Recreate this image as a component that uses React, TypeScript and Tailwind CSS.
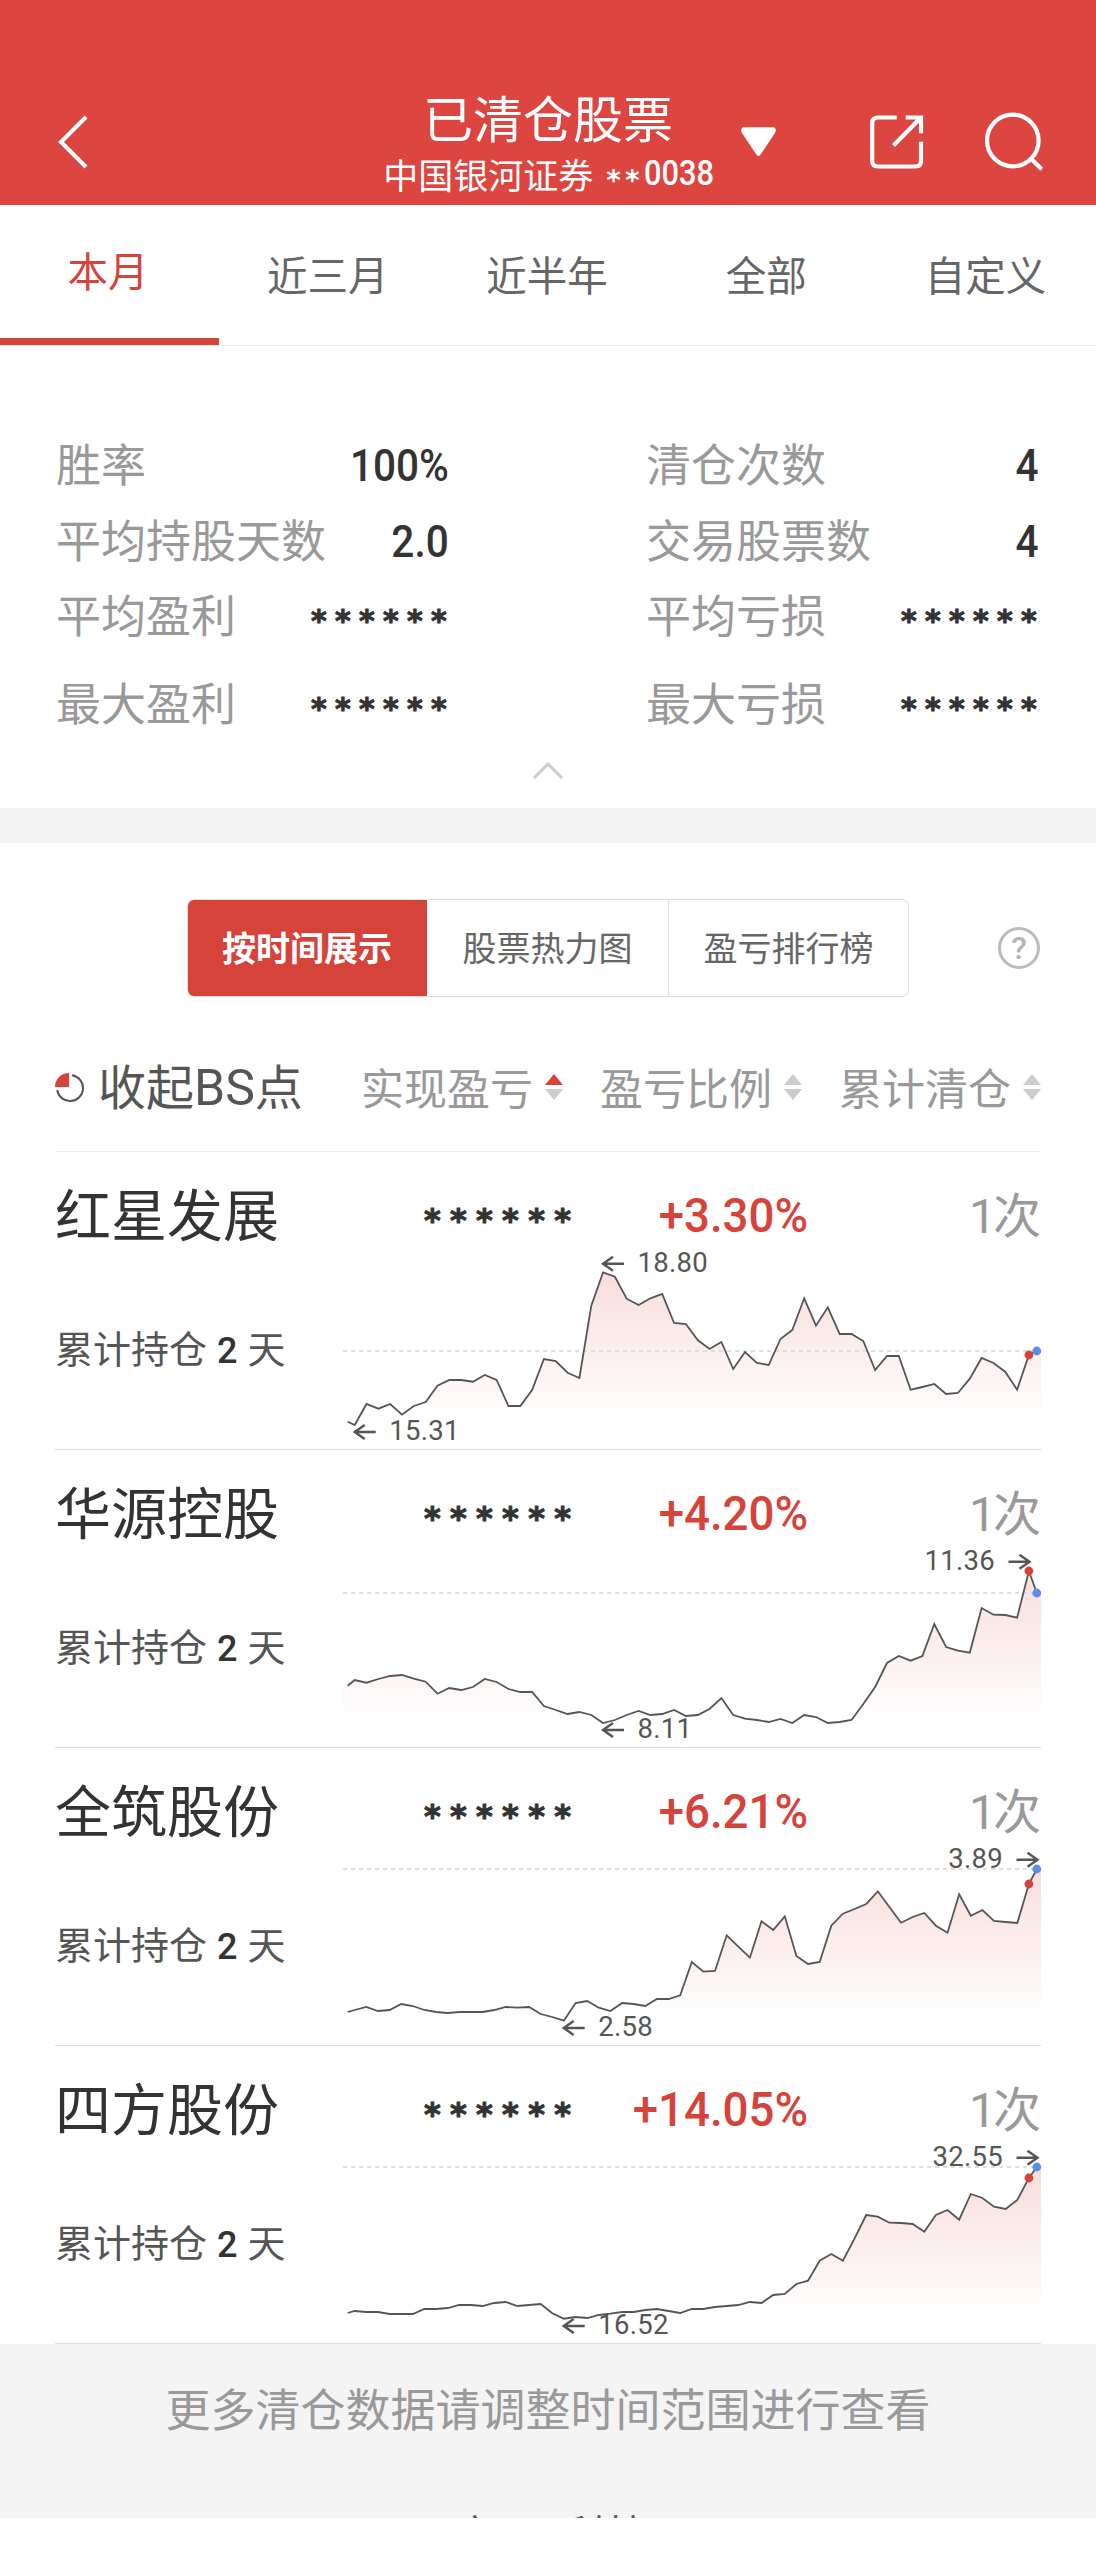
import React from 'react';

type Extreme = { value: string; tip: number; side: 'left' | 'right' };

interface Stock {
  name: string;
  percent: string;
  high: Extreme;
  low: Extreme;
  points: number[];
}

const STOCKS: Stock[] = [
  {
    name: '红星发展',
    percent: '+3.30%',
    high: { value: '18.80', tip: 260, side: 'left' },
    low: { value: '15.31', tip: 11.7, side: 'left' },
    points: [
      173.7, 177, 156, 160.7, 156, 166.7, 158, 154, 137.7, 132, 132, 133.7, 127, 132, 158, 158, 142, 111, 113, 124.7,
      130, 57.7, 24.3, 28.7, 50.7, 57, 50.3, 46, 75, 76, 92, 101, 94, 121, 104, 115, 117, 91, 82, 50.3, 77.7, 59.3, 86,
      86, 93, 122, 108, 108, 141.7, 139, 136, 146, 145, 130.7, 110, 115, 123.7, 141.7, 107, 103,
    ],
  },
  {
    name: '华源控股',
    percent: '+4.20%',
    high: { value: '11.36', tip: 686.5, side: 'right' },
    low: { value: '8.11', tip: 260, side: 'left' },
    points: [
      139.7, 134, 136.7, 133, 130, 129, 132.7, 135.7, 147.7, 142, 144, 141, 133, 136, 143, 146, 146, 160, 164, 168, 166,
      169, 177, 174, 169, 165, 169, 168, 164, 170, 169, 163, 152, 169, 172.7, 174, 176, 173, 177, 169, 171, 177, 176,
      174, 158, 141, 117, 110, 114.7, 110, 78, 101, 104.7, 106.7, 62, 68.7, 69, 71.7, 25, 47,
    ],
  },
  {
    name: '全筑股份',
    percent: '+6.21%',
    high: { value: '3.89', tip: 694.5, side: 'right' },
    low: { value: '2.58', tip: 220.7, side: 'left' },
    points: [
      168, 166, 163, 167, 166, 160, 162, 166, 168, 169, 168, 168, 168, 166, 163, 163.7, 163, 170, 173, 176.7, 159, 157,
      163.7, 167, 159, 160, 162, 155, 155, 151.3, 118, 127.7, 127, 91.3, 102.7, 113.7, 77.3, 86, 72.3, 112, 120, 118,
      81.7, 69.7, 65, 60, 47.3, 63, 78.7, 73, 69, 81.7, 88.7, 50.3, 71.7, 66, 77, 78, 79, 40, 25,
    ],
  },
  {
    name: '四方股份',
    percent: '+14.05%',
    high: { value: '32.55', tip: 694.5, side: 'right' },
    low: { value: '16.52', tip: 220.7, side: 'left' },
    points: [
      171, 169, 170, 170, 172, 172, 172, 167, 167, 166, 163, 163, 164, 161, 160, 164, 163, 162, 171.3, 176.7, 175, 176,
      173, 171.7, 170, 170, 168, 167, 169, 171, 167, 167, 165, 164, 163, 160, 161, 153, 152, 142, 138.7, 118.7, 112,
      118.7, 96.7, 73, 74.7, 80.7, 81, 82, 89.7, 73, 68, 77.7, 52, 56, 64.7, 67, 58, 36, 25,
    ],
  },
];

const STATS = [
  [
    { label: '胜率', value: '100%' },
    { label: '平均持股天数', value: '2.0' },
    { label: '平均盈利', value: '******' },
    { label: '最大盈利', value: '******' },
  ],
  [
    { label: '清仓次数', value: '4' },
    { label: '交易股票数', value: '4' },
    { label: '平均亏损', value: '******' },
    { label: '最大亏损', value: '******' },
  ],
];

const TABS = ['本月', '近三月', '近半年', '全部', '自定义'];

const Masked = ({ className }: { className: string }) => (
  <span
    className={`font-['DejaVu_Sans',sans-serif] font-bold text-[#333] [-webkit-text-stroke:1px_#333] ${className}`}
  >
    ******
  </span>
);

const Header = () => (
  <header className="flex h-[205px] items-start bg-[#dd4540] text-white">
    <svg className="mt-[114px] ml-[56px] h-[56px] w-[34px]" viewBox="0 0 34 56" fill="none" stroke="currentColor">
      <path d="M30 3 5 28 30 53" strokeWidth="4" />
    </svg>
    <div className="mt-[87px] ml-[292px] w-[332px] text-center">
      <h1 className="h-[62px] text-[50px] leading-[58px]">已清仓股票</h1>
      <p className="flex h-[50px] items-center justify-center pl-[5px] text-[35px] leading-[50px] whitespace-pre">
        中国银河证券
        <span className="mt-[13px] ml-[13px] font-['DejaVu_Sans',sans-serif] text-[28px] font-bold tracking-[4px]">
          **
        </span>
        <span className="w-[74px] origin-left scale-x-[0.88] font-['Roboto',sans-serif] text-[35px] font-medium">
          0038
        </span>
      </p>
    </div>
    <svg className="mt-[126px] ml-[25px] h-[32px] w-[38px]" viewBox="0 0 38 32" fill="currentColor">
      <path d="M4 1.3H35Q38 3 36 7L22 28Q19.5 32 17 28L3 7Q1 3 4 1.3Z" />
    </svg>
    <svg
      className="mt-[114px] ml-[92px] h-[56px] w-[56px]"
      viewBox="0 0 56 56"
      fill="none"
      stroke="currentColor"
      strokeWidth="4.2"
    >
      <path d="M27.7 3.5H9Q3.2 3.5 3.2 9V47Q3.2 52.5 9 52.5H46.5Q52 52.5 52 47V27.7" />
      <path d="M36.7 3.5H52V19.3M51 4.5 24.5 31.5" />
    </svg>
    <svg
      className="mt-[110px] ml-[56px] h-[62px] w-[64px]"
      viewBox="0 0 64 62"
      fill="none"
      stroke="currentColor"
      strokeWidth="4.2"
    >
      <circle cx="31.8" cy="30.5" r="25.8" />
      <path d="M49 47.7 60.7 59.3" />
    </svg>
  </header>
);

const Tabs = () => (
  <nav className="grid h-[141px] grid-cols-5 border-b border-[#ececec] text-[40.5px] text-[#666]">
    {TABS.map((tab, index) =>
      index === 0 ? (
        <div key={tab} className="border-b-[7px] border-[#d5433b] pr-[3px] text-center leading-[130px] text-[#d5433b]">
          {tab}
        </div>
      ) : (
        <div key={tab} className="pr-[2px] text-center leading-[137px]">
          {tab}
        </div>
      ),
    )}
  </nav>
);

const Stats = () => (
  <section className="h-[462px] px-[56px] pt-[79px]">
    <div className="flex gap-[197px]">
      {STATS.map((column, index) => (
        <div key={index} className="w-[393px]">
          {column.map(({ label, value }) => (
            <div key={label} className="flex h-[75.5px] items-center justify-between last:mt-[12px]">
              <span className="text-[45px] leading-[75px] text-[#999]">{label}</span>
              {value === '******' ? (
                <Masked className="mt-[14px] -mr-[6px] text-[30px] tracking-[8.3px]" />
              ) : (
                <span className="mt-[6px] origin-right scale-x-90 font-['Roboto',sans-serif] text-[45px] font-medium text-[#333]">
                  {value}
                </span>
              )}
            </div>
          ))}
        </div>
      ))}
    </div>
    <svg className="mx-auto mt-[21px] h-[20px] w-[32px]" viewBox="0 0 32 20" fill="none" stroke="#ccc" strokeWidth="3">
      <path d="M2 18 16 4 30 18" />
    </svg>
  </section>
);

const Switcher = () => (
  <div className="flex h-[98px] items-center pl-[187px]">
    <div className="flex h-[98px] w-[722px] overflow-hidden rounded-[7px] border border-[#ddd] text-center text-[34px] leading-[94px] text-[#666]">
      <div className="-my-px -ml-px w-[240px] bg-[#d5433b] pt-px font-bold text-white">按时间展示</div>
      <div className="w-[242px] border-r border-[#ddd]">股票热力图</div>
      <div className="flex-1">盈亏排行榜</div>
    </div>
    <div className="ml-[89px] flex h-[42px] w-[42px] items-center justify-center rounded-full border-3 border-[#bbb] font-['Roboto',sans-serif] text-[32px] leading-none font-medium text-[#b5b5b5]">
      ?
    </div>
  </div>
);

const SortArrows = ({ active = false }: { active?: boolean }) => (
  <svg className="mt-[2px] ml-[12px] h-[28px] w-[18px]" viewBox="0 0 18 28">
    <path d="M0 12 9 1 18 12Z" fill={active ? '#d5433b' : '#ccc'} />
    <path d="M0 16 9 27 18 16Z" fill="#ccc" />
  </svg>
);

const ColumnHeader = () => (
  <div className="mx-[55px] flex h-[127px] items-center border-b border-[#ececec] pb-[4px] text-[43px] text-[#999]">
    <svg className="mt-[3px] h-[30px] w-[30px]" viewBox="0 0 30 30">
      <path d="M17 2.2A13 13 0 1 1 2.2 17" fill="none" stroke="#555" strokeWidth="2" />
      <path d="M14 14V0A14 14 0 0 0 0 14Z" fill="#d5433b" />
    </svg>
    <span className="mt-[2px] ml-[13px] w-[206px] text-[48px] whitespace-nowrap text-[#555]">
      收起<span className="font-['Roboto',sans-serif] text-[50px]">BS</span>点
    </span>
    <div className="ml-auto flex items-center gap-[37px]">
      <div className="flex items-center">
        实现盈亏
        <SortArrows active />
      </div>
      <div className="flex items-center">
        盈亏比例
        <SortArrows />
      </div>
      <div className="flex items-center">
        累计清仓
        <SortArrows />
      </div>
    </div>
  </div>
);

const Marker = ({ mark, y }: { mark: Extreme; y: number }) => {
  const dir = mark.side === 'left' ? 1 : -1;
  return (
    <g>
      <path
        d={`M${mark.tip + 21 * dir} ${y}H${mark.tip}M${mark.tip + 10 * dir} ${y - 7}L${mark.tip} ${y}L${mark.tip + 10 * dir} ${y + 7}`}
        fill="none"
        stroke="#555"
        strokeWidth="2.4"
      />
      <text
        className="font-['Roboto',sans-serif] text-[27.5px] tracking-[0.3px]"
        x={mark.tip + 34.5 * dir}
        y={y + 8}
        textAnchor={dir === 1 ? 'start' : 'end'}
        fill="#555"
      >
        {mark.value}
      </text>
    </g>
  );
};

const Chart = ({ stock }: { stock: Stock }) => {
  const { points, high, low } = stock;
  const last = points.length - 1;
  // the first and last segments are shorter than the others
  const step = 674.2 / (last - 2);
  const xs = points.map((_, i) => (i === 0 ? 4.7 : i === last ? 693.8 : 11.7 + (i - 1) * step));
  const line = points.map((y, i) => `${xs[i].toFixed(1)} ${y}`).join('L');

  return (
    <svg className="h-[201px] w-[698px] overflow-visible" viewBox="0 0 698 201">
      <defs>
        <linearGradient id="area" gradientUnits="userSpaceOnUse" x1="0" y1="25" x2="0" y2="176">
          <stop offset="0" stopColor="#d5433b" stopOpacity="0.18" />
          <stop offset="1" stopColor="#d5433b" stopOpacity="0" />
        </linearGradient>
      </defs>
      <path d={`M0 176V${points[0]}L${line}L698 ${points[last]}V176Z`} fill="url(#area)" />
      <path d={`M0 ${points[last]}H698`} stroke="#ddd" strokeWidth="1.8" strokeDasharray="4 4" />
      <path d={`M${line}`} fill="none" stroke="#555" strokeWidth="1.8" />
      <Marker mark={high} y={15.7} />
      <Marker mark={low} y={184} />
      <circle cx={xs[last - 1]} cy={points[last - 1]} r="4.4" fill="#d5433b" />
      <circle cx={xs[last]} cy={points[last]} r="4.4" fill="#5a8fe6" />
    </svg>
  );
};

const StockRow = ({ stock }: { stock: Stock }) => (
  <div className="mx-[55px] h-[298px] border-b-[1.5px] border-[#ddd]">
    <div className="flex h-[96px] items-center pt-[24px]">
      <span className="w-[369px] text-[56px] leading-[66px] text-[#333]">{stock.name}</span>
      <Masked className="mt-[16px] text-[32px] leading-[40px] tracking-[9.3px]" />
      <span className="mt-[7px] ml-auto w-[200px] origin-right scale-x-[0.94] text-right font-['Roboto',sans-serif] text-[48.5px] leading-[66px] font-medium text-[#d5433b]">
        {stock.percent}
      </span>
      <span className="mt-[4px] w-[233px] text-right text-[48px] leading-[66px] text-[#999]">
        <span className="-mr-[3px] font-['Roboto',sans-serif]">1</span>次
      </span>
    </div>
    <div className="flex h-[201px]">
      <div className="w-[288px] pt-[74px] text-[38px] leading-[50px] text-[#555]">
        累计持仓
        <span className="mx-[10px] inline-block font-['Roboto',sans-serif] text-[36px] font-medium text-[#333]">2</span>
        天
      </div>
      <Chart stock={stock} />
    </div>
  </div>
);

export default function App() {
  return (
    <div className="h-[2560px] w-[1096px] overflow-hidden bg-white font-['Noto_Sans_CJK_SC',sans-serif]">
      <Header />
      <Tabs />
      <Stats />
      <div className="h-[35px] bg-[#f4f4f4]" />
      <main className="pt-[56px]">
        <Switcher />
        <div className="pt-[28px]">
          <ColumnHeader />
        </div>
        {STOCKS.map((stock) => (
          <StockRow key={stock.name} stock={stock} />
        ))}
      </main>
      <footer className="h-[174px] overflow-hidden bg-[#f4f4f4] text-center">
        <p className="pt-[31px] text-[45px] leading-[66px] text-[#999]">更多清仓数据请调整时间范围进行查看</p>
        {/* next block, cut off by the bottom of the list */}
        <p className="mt-[71px] flex justify-center gap-[32px] pl-[6px] text-[40px] leading-[40px] text-[#555]">
          <span>方正</span>
          <span>科技</span>
        </p>
      </footer>
    </div>
  );
}
